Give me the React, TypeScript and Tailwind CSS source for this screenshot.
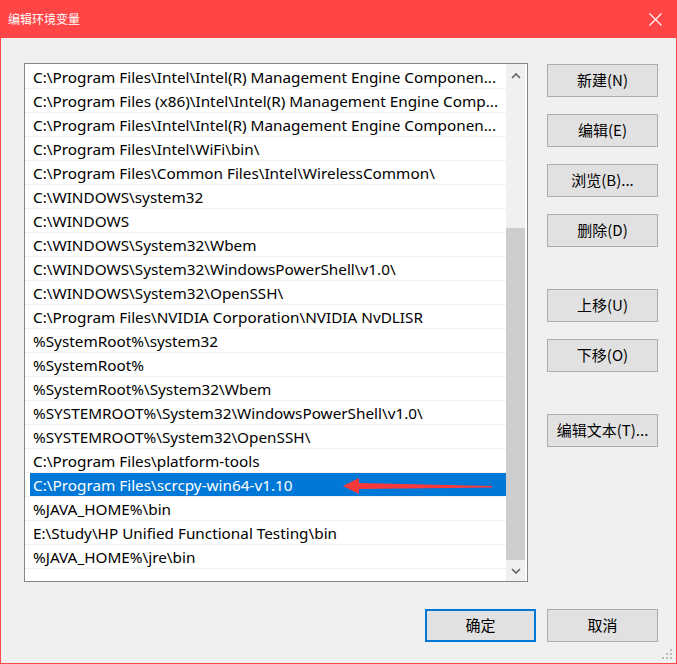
import React from 'react'

const paths = [
  'C:\\Program Files\\Intel\\Intel(R) Management Engine Componen...',
  'C:\\Program Files (x86)\\Intel\\Intel(R) Management Engine Comp...',
  'C:\\Program Files\\Intel\\Intel(R) Management Engine Componen...',
  'C:\\Program Files\\Intel\\WiFi\\bin\\',
  'C:\\Program Files\\Common Files\\Intel\\WirelessCommon\\',
  'C:\\WINDOWS\\system32',
  'C:\\WINDOWS',
  'C:\\WINDOWS\\System32\\Wbem',
  'C:\\WINDOWS\\System32\\WindowsPowerShell\\v1.0\\',
  'C:\\WINDOWS\\System32\\OpenSSH\\',
  'C:\\Program Files\\NVIDIA Corporation\\NVIDIA NvDLISR',
  '%SystemRoot%\\system32',
  '%SystemRoot%',
  '%SystemRoot%\\System32\\Wbem',
  '%SYSTEMROOT%\\System32\\WindowsPowerShell\\v1.0\\',
  '%SYSTEMROOT%\\System32\\OpenSSH\\',
  'C:\\Program Files\\platform-tools',
  'C:\\Program Files\\scrcpy-win64-v1.10',
  '%JAVA_HOME%\\bin',
  'E:\\Study\\HP Unified Functional Testing\\bin',
  '%JAVA_HOME%\\jre\\bin',
]

const SELECTED = 17

function Button({ label, primary = false }: { label: string; primary?: boolean }) {
  return (
    <button
      className={
        'w-[111px] h-[33px] flex items-center justify-center bg-[#e1e1e1] text-[15px] text-black ' +
        (primary ? 'border-2 border-[#0078d7]' : 'border border-[#adadad]')
      }
    >
      {label}
    </button>
  )
}

function Arrow() {
  return (
    <svg
      className="absolute left-[315px] top-[3px]"
      width="155"
      height="20"
      viewBox="0 0 155 20"
    >
      <path d="M3 10 L19 2 L19 7 L152 10 L152 11.5 L19 13 L19 18 Z" fill="#f8393b" />
    </svg>
  )
}

export default function App() {
  return (
    <div
      className="w-[677px] h-[664px] flex flex-col bg-[#f0f0f0] border-x border-b border-[#ff4545] relative"
      style={{ fontFamily: '"Noto Sans", "Noto Sans CJK SC", sans-serif' }}
    >
      {/* title bar */}
      <div className="h-[38px] -mx-px bg-[#ff4545] flex items-center justify-between pl-[8px] pr-[15px]">
        <span className="text-white text-[12px]" style={{ fontFamily: '"Noto Sans CJK SC", sans-serif' }}>
          编辑环境变量
        </span>
        <svg width="13" height="13" viewBox="0 0 13 13">
          <path d="M0.5 0.5 L12.5 12.5 M12.5 0.5 L0.5 12.5" stroke="#fff" strokeWidth="1.1" />
        </svg>
      </div>

      <div className="flex pl-[23px] pt-[25px]">
        {/* list box */}
        <div className="w-[504px] h-[519px] border border-[#828790] bg-white flex pr-[2px]">
          <div className="flex-1 pt-px">
            {paths.map((p, i) => (
              <div key={i} className="h-[24px] border-b border-[#f0f0f0] flex relative">
                <div
                  className={
                    'flex-1 flex items-center pt-px text-[15.3px] whitespace-nowrap ' +
                    (i === SELECTED ? 'ml-[5px] pl-[3px] bg-[#0078d7] text-white' : 'pl-[8px] text-black')
                  }
                >
                  {p}
                </div>
                {i === SELECTED && <Arrow />}
              </div>
            ))}
          </div>
          {/* scrollbar */}
          <div className="w-[19px] bg-[#f0f0f0] flex flex-col">
            <div className="h-[23px] flex items-center justify-center pt-[1px]">
              <svg width="10" height="6" viewBox="0 0 10 6">
                <path d="M1 5 L5 1 L9 5" stroke="#606060" strokeWidth="1.6" fill="none" />
              </svg>
            </div>
            <div className="h-[141px]" />
            <div className="h-[332px] bg-[#cdcdcd]" />
            <div className="flex-1 flex items-center justify-center">
              <svg width="10" height="6" viewBox="0 0 10 6">
                <path d="M1 1 L5 5 L9 1" stroke="#606060" strokeWidth="1.6" fill="none" />
              </svg>
            </div>
          </div>
        </div>

        {/* side buttons */}
        <div
          className="ml-[19px] mt-px flex flex-col"
          style={{ fontFamily: '"Noto Sans CJK SC", sans-serif' }}
        >
          <div className="flex flex-col gap-[17px]">
            <Button label="新建(N)" />
            <Button label="编辑(E)" />
            <Button label="浏览(B)..." />
            <Button label="删除(D)" />
          </div>
          <div className="flex flex-col gap-[17px] mt-[42px]">
            <Button label="上移(U)" />
            <Button label="下移(O)" />
          </div>
          <div className="mt-[42px]">
            <Button label="编辑文本(T)..." />
          </div>
        </div>
      </div>

      <div
        className="flex justify-end gap-[11px] pr-[18px] mt-[27px]"
        style={{ fontFamily: '"Noto Sans CJK SC", sans-serif' }}
      >
        <Button label="确定" primary />
        <Button label="取消" />
      </div>

      {/* resize grip */}
      <svg className="absolute right-[2px] bottom-[2px]" width="12" height="12" viewBox="0 0 12 12">
        <rect x="8" y="0" width="2" height="2" fill="#bcbcbc" />
        <rect x="4" y="4" width="2" height="2" fill="#bcbcbc" />
        <rect x="8" y="4" width="2" height="2" fill="#bcbcbc" />
        <rect x="0" y="8" width="2" height="2" fill="#bcbcbc" />
        <rect x="4" y="8" width="2" height="2" fill="#bcbcbc" />
        <rect x="8" y="8" width="2" height="2" fill="#bcbcbc" />
      </svg>
    </div>
  )
}
